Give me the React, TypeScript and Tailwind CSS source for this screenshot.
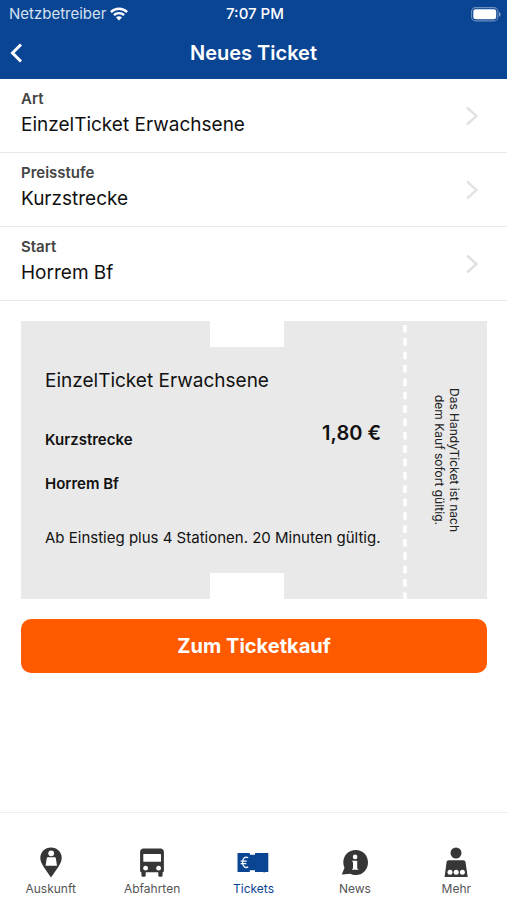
import React from "react";

type Field = { id: string; label: string; value: string };

const fields: Field[] = [
  { id: "art", label: "Art", value: "EinzelTicket Erwachsene" },
  { id: "preisstufe", label: "Preisstufe", value: "Kurzstrecke" },
  { id: "start", label: "Start", value: "Horrem Bf" },
];

function WifiIcon() {
  return (
    <svg viewBox="0 0 18 14" className="h-[14px] w-[18px]" fill="none" stroke="currentColor" strokeWidth="2.4" aria-hidden="true">
      <path d="M0.9 5.1a11.5 11.5 0 0 1 16.2 0" />
      <path d="M3.9 8.2a7.2 7.2 0 0 1 10.2 0" />
      <path d="M9 13.6 6 10.6a4.2 4.2 0 0 1 6 0z" fill="currentColor" stroke="none" />
    </svg>
  );
}

function BatteryIcon() {
  return (
    <svg viewBox="0 0 30 15" className="h-[15px] w-[30px]" aria-hidden="true">
      <rect x="0.6" y="0.6" width="26.3" height="13.3" rx="4" fill="none" stroke="#fff" strokeOpacity="0.4" strokeWidth="1.1" />
      <rect x="2.3" y="2.3" width="22.9" height="9.9" rx="2.2" fill="#fff" />
      <path d="M28 5v4.6c1.1-.4 1.6-1.300 1.600-2.300S29.100 5.400 28 5z" fill="#fff" fillOpacity="0.5" />
    </svg>
  );
}

function PinIcon() {
  return (
    <svg viewBox="0 0 22 31" className="h-[31px] w-[22px]" aria-hidden="true">
      <path d="M11 .5C5 .5.300 5 .300 10.800c0 3.400 1.500 6 3.600 9.400L11 30.500l7.100-10.300c2.100-3.400 3.600-6 3.600-9.400C21.700 5 17 .5 11 .5z" fill="currentColor" />
      <circle cx="11.200" cy="6.300" r="2.900" fill="#fff" />
      <path d="M7.700 10.300h7.200c.5 0 .8.300.9.700l1.200 7.800H5.600L6.800 11c.1-.4.400-.7.900-.7z" fill="#fff" />
    </svg>
  );
}

function BusIcon() {
  return (
    <svg viewBox="0 0 26 29" className="h-[29px] w-[26px]" aria-hidden="true">
      <path d="M4.500 .5h17c2 0 3.400 1.300 3.400 3.300v19c0 .8-.5 1.400-1.300 1.400v3c0 .9-.6 1.500-1.500 1.500h-1.300c-.9 0-1.500-.6-1.500-1.500v-3H6.700v3c0 .9-.6 1.500-1.500 1.500H3.900c-.9 0-1.500-.6-1.500-1.500v-3c-.8 0-1.300-.6-1.300-1.400v-19C1.100 1.800 2.500.5 4.500.5z" fill="currentColor" />
      <rect x="4.300" y="6" width="17.700" height="7.800" rx=".5" fill="#fff" />
      <circle cx="6.600" cy="20.200" r="2.400" fill="#fff" />
      <circle cx="19.600" cy="20.200" r="2.400" fill="#fff" />
    </svg>
  );
}

function TicketIcon() {
  return (
    <svg viewBox="0 0 32 21" className="h-[21px] w-[32px]" aria-hidden="true">
      <path d="M.5 1h12.300v1.700h5.200V1h13.300v19h-3.500v.6h-1.200V20H18v-1.800h-5.200V20H.5z" fill="currentColor" />
      <path d="M11.200 5.700C8.200 4 5.600 6.200 5.600 10.300s2.600 6.300 5.600 4.600M3.700 9.100h6M3.700 11.600h5.500" fill="none" stroke="#fff" strokeWidth="1.300" />
    </svg>
  );
}

function NewsIcon() {
  return (
    <svg viewBox="0 0 28 27" className="h-[27px] w-[28px]" aria-hidden="true">
      <path d="M14.700 1c7 0 12.300 5.300 12.300 12.400S21.700 26 14.700 26c-2 0-3.900-.5-5.500-1.300L.8 25.500l2.700-6.800c-.8-1.600-1.200-3.400-1.200-5.300C2.300 6.300 7.700 1 14.700 1z" fill="currentColor" />
      <circle cx="14.100" cy="7.900" r="2.300" fill="#fff" />
      <path d="M11.700 11.700h4.500v8h1.100v1h-6.200v-1h.9v-6.900h-.9v-1.100z" fill="#fff" />
    </svg>
  );
}

function MoreIcon() {
  return (
    <svg viewBox="0 0 24 30" className="h-[30px] w-[24px]" aria-hidden="true">
      <circle cx="12" cy="6" r="5.500" fill="currentColor" />
      <path d="M4.700 13.200h14.600c1.200 0 2 .7 2.200 1.900L23.700 30H.6l2-14.900c.2-1.200.9-1.900 2.100-1.900z" fill="currentColor" />
      <circle cx="6" cy="25.300" r="2.500" fill="#fff" />
      <circle cx="12.200" cy="25.300" r="2.500" fill="#fff" />
      <circle cx="18.400" cy="25.300" r="2.500" fill="#fff" />
    </svg>
  );
}

const tabs = [
  { label: "Auskunft", Icon: PinIcon },
  { label: "Abfahrten", Icon: BusIcon },
  { label: "Tickets", Icon: TicketIcon, active: true },
  { label: "News", Icon: NewsIcon },
  { label: "Mehr", Icon: MoreIcon },
];

export default function App() {
  return (
    <div className="flex min-h-screen flex-col bg-white font-['Inter',sans-serif] text-[#111]">
      <header className="bg-[#0a4594] text-white">
        <div className="grid h-7 grid-cols-3 items-center pr-[6px] pl-[9px] text-[15px]">
          <span className="flex items-center gap-1 text-[#d5e0f0]">
            Netzbetreiber
            <span className="text-white"><WifiIcon /></span>
          </span>
          <span className="text-center font-medium">7:07 PM</span>
          <span className="flex justify-end"><BatteryIcon /></span>
        </div>
        <div className="grid h-[51px] grid-cols-[40px_1fr_40px] items-center pb-[2px]">
          <button type="button" aria-label="Zurück" className="flex h-full items-center pl-[9px]">
            <svg viewBox="0 0 14 20" className="h-5 w-[14px]" fill="none" stroke="currentColor" strokeWidth="3" aria-hidden="true">
              <path d="M12 1.500 3.500 10l8.500 8.500" />
            </svg>
          </button>
          <h1 className="text-center text-[20px] font-semibold">Neues Ticket</h1>
        </div>
      </header>

      <main className="flex flex-1 flex-col">
        {fields.map((f) => (
          <button key={f.id} type="button" className="flex h-[74px] items-center justify-between border-b border-[#e9e9e9] pr-[28px] pl-[21px] text-left">
            <span className="flex flex-col pb-[2px]">
              <span className="text-[15px] leading-5 font-semibold text-[#444]">{f.label}</span>
              <span className="text-[19px] leading-8">{f.value}</span>
            </span>
            <svg viewBox="0 0 14 20" className="h-5 w-[14px]" fill="none" stroke="#e2e2e2" strokeWidth="2.400" aria-hidden="true">
              <path d="M2 1.500 11.500 10 2 18.500" />
            </svg>
          </button>
        ))}

        <div className="flex flex-col gap-5 pt-5 pr-5 pl-[21px]">
          <section className="relative flex h-[278px] bg-[#e9e9e9]">
            <div className="absolute top-0 left-[189px] h-[26px] w-[74px] bg-white" />
            <div className="absolute bottom-0 left-[189px] h-[26px] w-[74px] bg-white" />
            <div className="flex min-w-0 flex-1 flex-col pt-11 pr-[22px] pl-6">
              <h2 className="text-[19px] leading-8">EinzelTicket Erwachsene</h2>
              <div className="mt-5 flex justify-between">
                <div className="flex flex-col gap-5 pt-[11px] text-[15px] leading-6 font-semibold">
                  <p>Kurzstrecke</p>
                  <p>Horrem Bf</p>
                </div>
                <p className="text-[20px] leading-8 font-semibold">1,80 €</p>
              </div>
              <p className="mt-[30px] text-[15px] leading-6 whitespace-nowrap">Ab Einstieg plus 4 Stationen. 20 Minuten gültig.</p>
            </div>
            <svg className="mt-1 h-[274px] w-1 shrink-0" aria-hidden="true">
              <line x1="2" y1="0" x2="2" y2="274" stroke="#fff" strokeWidth="3.500" strokeDasharray="7.500 5.870" />
            </svg>
            <p className="flex w-20 shrink-0 items-center justify-center text-center text-[12px] leading-[15px] text-[#222] [writing-mode:vertical-rl]">
              <span>Das HandyTicket ist nach<br />dem Kauf sofort gültig.</span>
            </p>
          </section>
          <button type="button" className="h-[54px] rounded-[10px] bg-[#ff5a00] text-[20px] font-bold text-white">Zum Ticketkauf</button>
        </div>
      </main>

      <nav className="grid h-[88px] grid-cols-5 border-t border-[#eee] pt-8">
        {tabs.map(({ label, Icon, active }) => (
          <a key={label} href="#" aria-current={active ? "page" : undefined} className={active ? "flex flex-col items-center text-[#0a4594]" : "flex flex-col items-center text-[#363636]"}>
            <span className="flex h-[34px] items-center">
              <Icon />
            </span>
            <span className={active ? "text-[12px] leading-5" : "text-[12px] leading-5 text-[#555]"}>{label}</span>
          </a>
        ))}
      </nav>
    </div>
  );
}
